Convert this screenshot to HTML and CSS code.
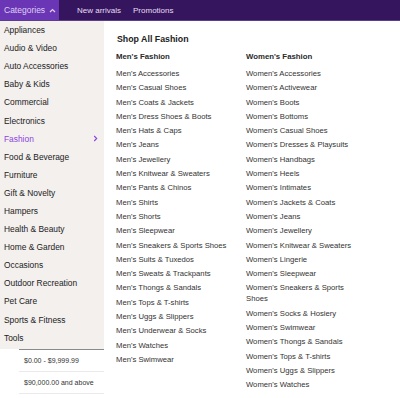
FILE: index.html
```html
<!DOCTYPE html>
<html>
<head>
<meta charset="utf-8">
<link rel="stylesheet" href="styles.css">
</head>
<body>
<nav class="topbar">
  <div class="cat-btn">Categories <svg class="chev-up" width="7" height="5" viewBox="0 0 7 5"><path d="M1 4 L3.5 1.5 L6 4" fill="none" stroke="currentColor" stroke-width="1.2"/></svg></div>
  <a class="nav-link">New arrivals</a>
  <a class="nav-link">Promotions</a>
</nav>
<div class="main">
  <aside class="side">
    <ul class="cats">
      <li>Appliances</li>
      <li>Audio &amp; Video</li>
      <li>Auto Accessories</li>
      <li>Baby &amp; Kids</li>
      <li>Commercial</li>
      <li>Electronics</li>
      <li class="active">Fashion <svg class="chev-r" width="5" height="7" viewBox="0 0 5 7"><path d="M1.2 1 L3.7 3.5 L1.2 6" fill="none" stroke="currentColor" stroke-width="1.1"/></svg></li>
      <li>Food &amp; Beverage</li>
      <li>Furniture</li>
      <li>Gift &amp; Novelty</li>
      <li>Hampers</li>
      <li>Health &amp; Beauty</li>
      <li>Home &amp; Garden</li>
      <li>Occasions</li>
      <li>Outdoor Recreation</li>
      <li>Pet Care</li>
      <li>Sports &amp; Fitness</li>
      <li>Tools</li>
    </ul>
    <ul class="prices">
      <li>$0.00 - $9,999.99</li>
      <li>$90,000.00 and above</li>
    </ul>
  </aside>
  <section class="content">
    <h1 class="title">Shop All Fashion</h1>
    <div class="cols">
      <div class="col">
        <h2>Men's Fashion</h2>
        <ul>
          <li>Men's Accessories</li>
          <li>Men's Casual Shoes</li>
          <li>Men's Coats &amp; Jackets</li>
          <li>Men's Dress Shoes &amp; Boots</li>
          <li>Men's Hats &amp; Caps</li>
          <li>Men's Jeans</li>
          <li>Men's Jewellery</li>
          <li>Men's Knitwear &amp; Sweaters</li>
          <li>Men's Pants &amp; Chinos</li>
          <li>Men's Shirts</li>
          <li>Men's Shorts</li>
          <li>Men's Sleepwear</li>
          <li>Men's Sneakers &amp; Sports Shoes</li>
          <li>Men's Suits &amp; Tuxedos</li>
          <li>Men's Sweats &amp; Trackpants</li>
          <li>Men's Thongs &amp; Sandals</li>
          <li>Men's Tops &amp; T-shirts</li>
          <li>Men's Uggs &amp; Slippers</li>
          <li>Men's Underwear &amp; Socks</li>
          <li>Men's Watches</li>
          <li>Men's Swimwear</li>
        </ul>
      </div>
      <div class="col">
        <h2>Women's Fashion</h2>
        <ul>
          <li>Women's Accessories</li>
          <li>Women's Activewear</li>
          <li>Women's Boots</li>
          <li>Women's Bottoms</li>
          <li>Women's Casual Shoes</li>
          <li>Women's Dresses &amp; Playsuits</li>
          <li>Women's Handbags</li>
          <li>Women's Heels</li>
          <li>Women's Intimates</li>
          <li>Women's Jackets &amp; Coats</li>
          <li>Women's Jeans</li>
          <li>Women's Jewellery</li>
          <li>Women's Knitwear &amp; Sweaters</li>
          <li>Women's Lingerie</li>
          <li>Women's Sleepwear</li>
          <li>Women's Sneakers &amp; Sports Shoes</li>
          <li>Women's Socks &amp; Hosiery</li>
          <li>Women's Swimwear</li>
          <li>Women's Thongs &amp; Sandals</li>
          <li>Women's Tops &amp; T-shirts</li>
          <li>Women's Uggs &amp; Slippers</li>
          <li>Women's Watches</li>
        </ul>
      </div>
    </div>
  </section>
</div>
</body>
</html>
```
FILE: styles.css
```css
* { box-sizing: border-box; }
html, body { margin: 0; padding: 0; background: #fff; }
body {
  font-family: "Liberation Sans", Arial, sans-serif;
  color: #222;
  width: 400px;
  height: 398px;
  overflow: hidden;
}
ul { list-style: none; margin: 0; padding: 0; }
h1, h2 { margin: 0; }

.topbar {
  height: 21px;
  background: #35165e;
  display: flex;
  align-items: flex-start;
  border-bottom: 1px solid #5c3f86;
}
.cat-btn {
  background: #6b36b5;
  color: #ded0f3;
  font-size: 8.5px;
  display: flex;
  align-items: center;
  gap: 4px;
  padding: 0 0 0 4px;
  width: 59px;
  height: 20px;
  white-space: nowrap;
}
.chev-up { margin-top: 1px; flex: none; }
.nav-link {
  color: #e6ddf3;
  font-size: 8px;
  display: flex;
  align-items: center;
  height: 20px;
}
.nav-link:nth-of-type(1) { margin-left: 18px; }
.nav-link + .nav-link { margin-left: 12px; }

.main { display: flex; }

.side { width: 104px; flex: none; }
.cats {
  background: #f3f0ee;
  padding-bottom: 2px;
}
.cats li {
  height: 18.1px;
  display: flex;
  align-items: center;
  justify-content: space-between;
  padding: 0 6px 0 4px;
  font-size: 8.4px;
  color: #222;
}
.cats li.active { color: #8d44dd; }
.prices {
  margin-left: 19px;
  border-top: 1px solid #8a8a8a;
}
.prices li {
  height: 22px;
  display: flex;
  align-items: center;
  padding-left: 5px;
  font-size: 7px;
  color: #333;
  border-bottom: 1px solid #eaeaea;
}

.content {
  flex: 1;
  padding: 11px 0 0 12px;
}
.title {
  font-size: 8.8px;
  font-weight: bold;
  color: #222;
  height: 14px;
  line-height: 14px;
  margin-left: 1px;
}
.cols {
  display: grid;
  grid-template-columns: 120px 120px;
  column-gap: 10px;
  margin-top: 5px;
}
.col h2 {
  font-size: 7.8px;
  font-weight: bold;
  color: #2a2a2a;
  line-height: 11px;
  margin-bottom: 6px;
}
.col li {
  font-size: 7.7px;
  line-height: 11px;
  margin-bottom: 3.3px;
  color: #333;
}
```
